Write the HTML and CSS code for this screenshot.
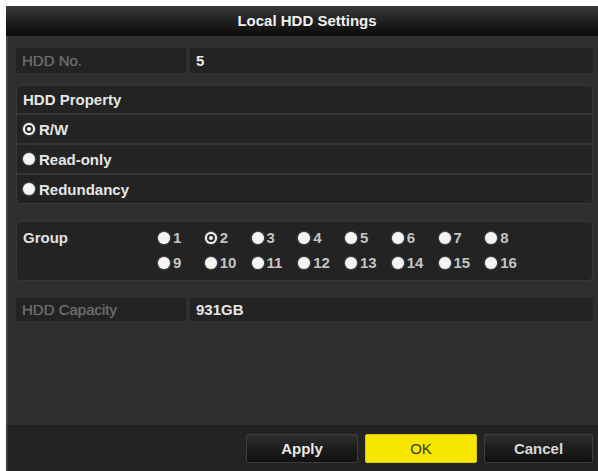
FILE: index.html
```html
<!DOCTYPE html>
<html>
<head>
<meta charset="utf-8">
<link rel="stylesheet" href="styles.css">
</head>
<body>
<div class="window">
  <div class="titlebar">Local HDD Settings</div>
  <div class="content">
    <div class="field">
      <div class="cell label dim">HDD No.</div>
      <div class="cell value">5</div>
    </div>
    <div class="box property">
      <div class="prow head">HDD Property</div>
      <div class="prow"><span class="radio on"></span>R/W</div>
      <div class="prow"><span class="radio"></span>Read-only</div>
      <div class="prow"><span class="radio"></span>Redundancy</div>
    </div>
    <div class="box group">
      <div class="glabel">Group</div>
      <div class="gopts">
        <div class="opt"><span class="radio"></span>1</div>
        <div class="opt"><span class="radio on"></span>2</div>
        <div class="opt"><span class="radio"></span>3</div>
        <div class="opt"><span class="radio"></span>4</div>
        <div class="opt"><span class="radio"></span>5</div>
        <div class="opt"><span class="radio"></span>6</div>
        <div class="opt"><span class="radio"></span>7</div>
        <div class="opt"><span class="radio"></span>8</div>
        <div class="opt"><span class="radio"></span>9</div>
        <div class="opt"><span class="radio"></span>10</div>
        <div class="opt"><span class="radio"></span>11</div>
        <div class="opt"><span class="radio"></span>12</div>
        <div class="opt"><span class="radio"></span>13</div>
        <div class="opt"><span class="radio"></span>14</div>
        <div class="opt"><span class="radio"></span>15</div>
        <div class="opt"><span class="radio"></span>16</div>
      </div>
    </div>
    <div class="field cap">
      <div class="cell label dim">HDD Capacity</div>
      <div class="cell value">931GB</div>
    </div>
  </div>
  <div class="footer">
    <button class="btn">Apply</button>
    <button class="btn ok">OK</button>
    <button class="btn cancel">Cancel</button>
  </div>
</div>
</body>
</html>
```
FILE: styles.css
```css
html, body {
  margin: 0;
  padding: 0;
  background: #ffffff;
}
body {
  font-family: "Liberation Sans", Arial, sans-serif;
  width: 598px;
  height: 471px;
  overflow: hidden;
}
.window {
  margin: 6px 0 0 6px;
  width: 592px;
  height: 465px;
  display: flex;
  flex-direction: column;
  background: #2e2e2e;
}
.titlebar {
  height: 30px;
  flex: none;
  background: linear-gradient(#3a3a3a 0%, #1e1e1e 55%, #0a0a0a 100%);
  color: #f0f0f0;
  font-size: 15px;
  font-weight: bold;
  text-align: center;
  line-height: 29px;
  padding-left: 10px;
}
.content {
  flex: 1;
  padding: 12px 5px 0 10px;
  display: flex;
  flex-direction: column;
  background: #2f2f2f;
  box-shadow: inset 2px 0 0 #444;
}
.field {
  display: grid;
  grid-template-columns: 170px 1fr;
  column-gap: 4px;
  height: 25px;
}
.field.cap {
  height: 23px;
  margin-top: 17px;
}
.cell {
  background: #232323;
  border-radius: 2px;
  display: flex;
  align-items: center;
  padding-left: 6px;
  font-size: 15px;
  font-weight: bold;
  color: #e8e8e8;
}
.cell.dim {
  color: #6e6e6e;
  font-weight: normal;
  text-shadow: 0 0 1px #555;
}
.box {
  background: #232323;
  border: 1px solid #383838;
  border-radius: 4px;
}
.property {
  margin-top: 12px;
  display: flex;
  flex-direction: column;
}
.prow {
  height: 28px;
  display: flex;
  align-items: center;
  padding-left: 6px;
  font-size: 15px;
  font-weight: bold;
  color: #e6e6e6;
  border-top: 2px solid #353535;
}
.prow.head {
  border-top: none;
  height: 27px;
}
.prow .radio {
  margin-right: 4px;
}
.radio {
  width: 12px;
  height: 12px;
  border-radius: 50%;
  background: #f4f4f4;
  box-shadow: 0 0 2px rgba(255,255,255,0.6);
  margin-right: 3px;
  flex: none;
  position: relative;
  box-sizing: border-box;
}
.radio.on::after {
  content: "";
  position: absolute;
  left: 2px;
  top: 2px;
  width: 8px;
  height: 8px;
  border-radius: 50%;
  box-sizing: border-box;
  border: 2px solid #2a2a2a;
  background: #f4f4f4;
}
.group {
  margin-top: 17px;
  height: 60px;
  display: flex;
  padding: 3px 0 0 6px;
  box-sizing: border-box;
}
.glabel {
  width: 135px;
  flex: none;
  height: 25px;
  line-height: 25px;
  font-size: 15px;
  font-weight: bold;
  color: #e0e0e0;
}
.gopts {
  display: grid;
  grid-template-columns: repeat(8, 46.75px);
  grid-auto-rows: 25px;
}
.opt {
  display: flex;
  align-items: center;
  font-size: 15px;
  font-weight: bold;
  color: #c4c4c4;
}
.footer {
  height: 46px;
  flex: none;
  background: #232323;
  box-shadow: inset 2px 0 0 #3a3a3a;
  display: flex;
  justify-content: flex-end;
  align-items: flex-start;
  padding: 9px 5px 0 0;
  box-sizing: border-box;
  gap: 7px;
}
.btn {
  width: 112px;
  height: 29px;
  border: 1px solid #3c3c3c;
  border-radius: 2px;
  background: linear-gradient(#303030 0%, #1c1c1c 50%, #111 100%);
  color: #e8e8e8;
  font-family: "Liberation Sans", Arial, sans-serif;
  font-size: 15px;
  font-weight: bold;
  padding: 0;
}
.btn.cancel {
  width: 109px;
  color: #d8d8d8;
}
.btn.ok {
  background: #f7e600;
  border-color: #d8c800;
  color: #3a3a1a;
  font-weight: normal;
}
```
